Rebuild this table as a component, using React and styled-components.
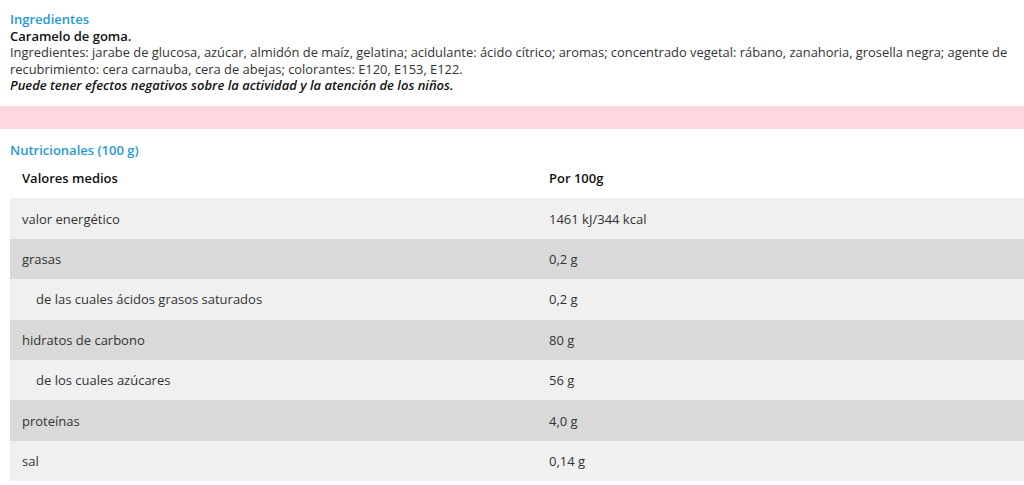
import styled, { createGlobalStyle } from 'styled-components';

const Global = createGlobalStyle`
  body {
    margin: 0;
    background: #fff;
    font-family: "Open Sans", "Noto Sans", sans-serif;
    color: #222;
  }
`
const Page = styled.div`
  padding-top: 11px;
`
const Section = styled.div`
  padding: 0 6px 0 10px;
`
const Heading = styled.h3`
  margin: 0;
  font-size: 13px;
  font-weight: 600;
  line-height: 16.5px;
  color: #1f9ad6;
`
const Product = styled.p`
  margin: 0;
  font-size: 13px;
  font-weight: 600;
  line-height: 16.5px;
  color: #111;
`
const Text = styled.p`
  margin: 0;
  font-size: 12.9px;
  line-height: 16.5px;
  color: #333;
`
const Warning = styled.p`
  margin: 0;
  font-size: 13px;
  line-height: 16.5px;
  font-weight: 600;
  font-style: italic;
  color: #111;
`
const PinkBar = styled.div`
  height: 23px;
  margin: 12px 0 13px;
  background: #fdd8df;
`
const Table = styled.div`
  margin-left: 10px;
`
const Row = styled.div`
  display: grid;
  grid-template-columns: 527px 1fr;
  height: 40.4px;
  align-items: center;
  background: ${p => p.bg};
  font-size: 13px;
  font-weight: ${p => (p.head ? 600 : 400)};
  color: ${p => (p.head ? '#111' : '#333')};
`
const Cell = styled.div`
  padding-left: ${p => (p.indent ? 26 : 12)}px;
`

const rows = [
  ['valor energético', '1461 kJ/344 kcal'],
  ['grasas', '0,2 g'],
  ['de las cuales ácidos grasos saturados', '0,2 g', true],
  ['hidratos de carbono', '80 g'],
  ['de los cuales azúcares', '56 g', true],
  ['proteínas', '4,0 g'],
  ['sal', '0,14 g'],
]

export default function App() {
  return (
    <Page>
      <Global />
      <Section>
        <Heading>Ingredientes</Heading>
        <Product>Caramelo de goma.</Product>
        <Text>
          Ingredientes: jarabe de glucosa, azúcar, almidón de maíz, gelatina; acidulante: ácido cítrico; aromas; concentrado vegetal: rábano, zanahoria, grosella negra; agente de recubrimiento: cera carnauba, cera de abejas; colorantes: E120, E153, E122.
        </Text>
        <Warning>Puede tener efectos negativos sobre la actividad y la atención de los niños.</Warning>
      </Section>
      <PinkBar />
      <Section>
        <Heading>Nutricionales (100 g)</Heading>
      </Section>
      <Table>
        <Row head bg="#fff">
          <Cell>Valores medios</Cell>
          <Cell>Por 100g</Cell>
        </Row>
        {rows.map(([name, value, indent], i) => (
          <Row key={name} bg={i % 2 === 0 ? '#f0f0f0' : '#d9d9d9'}>
            <Cell indent={indent}>{name}</Cell>
            <Cell>{value}</Cell>
          </Row>
        ))}
      </Table>
    </Page>
  )
}
